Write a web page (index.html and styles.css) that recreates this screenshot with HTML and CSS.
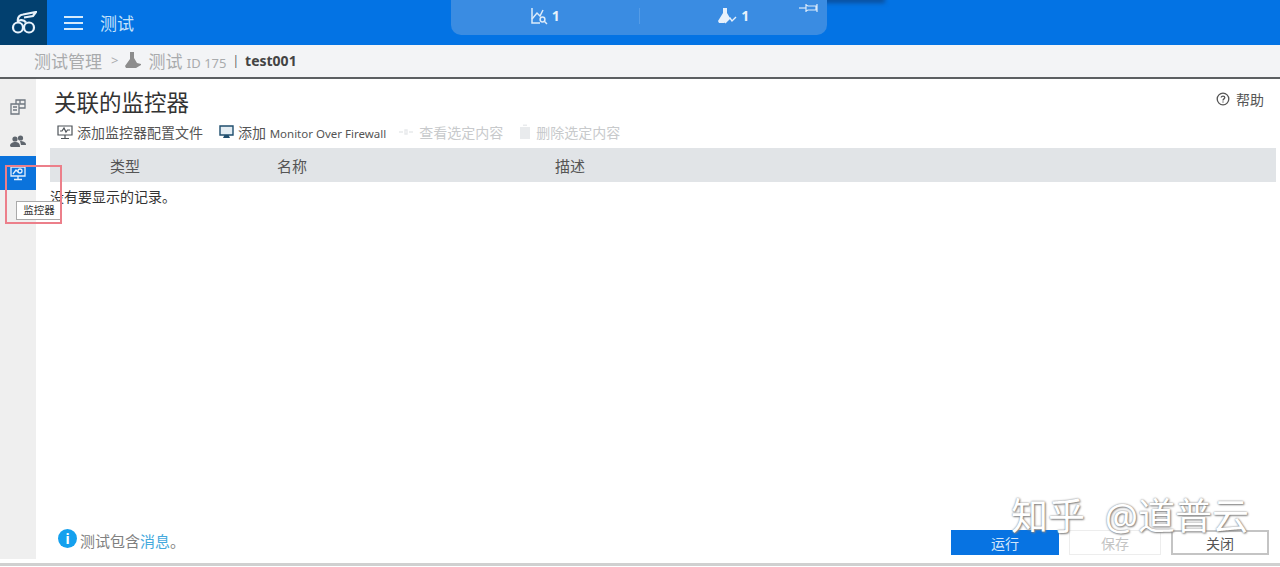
FILE: index.html
```html
<!doctype html>
<html lang="zh-CN">

<head>
    <meta charset="UTF-8">
    <meta name="viewport" content="width=device-width, initial-scale=1.0">
    <title>测试</title>
    <link rel="stylesheet" href="styles.css">
</head>

<body>
    <header class="top-bar">
        <div class="logo">
            <svg width="26" height="24" viewBox="0 0 26 24" fill="none" stroke="#e8f2fb" stroke-width="2.2">
                <circle cx="7" cy="16.5" r="5" />
                <circle cx="18" cy="16.5" r="5" />
                <path d="M7 11 C 8 8 13 9 15 11.5" />
                <path d="M7 11 C 6 6 9 4 12 3.5 L25 1 L22 5 L13 6.5" />
            </svg>
        </div>
        <div class="menu-icon"><span></span><span></span><span></span></div>
        <div class="page-title">测试</div>
        <div class="top-shade"></div>
        <div class="summary-panel">
            <div class="summary-item">
                <svg width="18" height="18" viewBox="0 0 18 18" fill="none" stroke="#dcebfa" stroke-width="1.5">
                    <path d="M2 1 V16 H10" />
                    <path d="M2 12 L7 6 L10 9 L13 3" />
                    <circle cx="12.5" cy="12.5" r="2.4" />
                    <path d="M14.3 14.3 L17 17" />
                </svg>
                <span>1</span>
            </div>
            <div class="summary-divider"></div>
            <div class="summary-item">
                <svg width="20" height="18" viewBox="0 0 20 18" fill="#e6f0fb">
                    <path d="M6 1 H10 V6 L13 11 L9 15 L7 16 H2 L1 14 L6 6 Z" />
                    <path d="M8 16 L13 11 L15 14 L19 10" fill="none" stroke="#e6f0fb" stroke-width="1.4" />
                </svg>
                <span>1</span>
            </div>
            <svg class="pin" width="19" height="10" viewBox="0 0 19 10" fill="none" stroke="#dcebfa" stroke-width="1.2">
                <path d="M0 5 H7" />
                <path d="M7 1 V9 M7 2 L9 3 H17 V7 H9 L7 8 M18 1 V9" />
            </svg>
        </div>
    </header>

    <nav class="breadcrumb">
        <span>测试管理</span>
        <span class="crumb-sep">&gt;</span>
        <svg width="18" height="18" viewBox="0 0 18 18" fill="#8d8d8d">
            <path d="M6 1 H10 V7 L13 12 L17 13 V14 L12 17 H2 L1 15 L6 8 Z" />
        </svg>
        <span>测试 <span class="crumb-id">ID 175</span></span>
        <span class="crumb-bar">|</span>
        <b class="crumb-name">test001</b>
    </nav>

    <div class="content-wrap">
        <aside class="side-nav">
            <div class="side-item">
                <svg width="16" height="16" viewBox="0 0 16 16" fill="none" stroke="#6f7780" stroke-width="1.3">
                    <path d="M1 5 H9 V15 H1 Z M3 8 H7 M3 11 H7" />
                    <path d="M6 5 V1 H15 V9 H9 M10 1 V5 H15" />
                </svg>
            </div>
            <div class="side-item people">
                <svg width="16" height="14" viewBox="0 0 16 14" fill="#5f666e">
                    <circle cx="5" cy="4" r="2.6" />
                    <circle cx="10.5" cy="3" r="2.6" />
                    <path d="M0 11 C0 8 3 7 5 7 C8 7 10 8 10 12 H1 Z" />
                    <path d="M10 6 C13 6 16 7 16 10 H11 Z" />
                </svg>
            </div>
            <div class="side-item active">
                <svg width="16" height="15" viewBox="0 0 16 15" fill="none" stroke="#e4f0fc" stroke-width="1.3">
                    <path d="M1 1 H15 V10 H1 Z" />
                    <path d="M4 13.5 H12 M8 10 V13.5" />
                    <circle cx="10" cy="5" r="2" />
                    <path d="M3 8 L6 4 L8 6" />
                </svg>
            </div>
        </aside>

        <main class="main">
            <div class="title-row">
                <h1>关联的监控器</h1>
                <div class="help">
                    <svg width="14" height="14" viewBox="0 0 14 14" fill="none" stroke="#555" stroke-width="1.3">
                        <circle cx="7" cy="7" r="5.8" />
                        <path d="M5.2 5.6 C5.2 3.6 8.8 3.6 8.8 5.6 C8.8 7 7 6.8 7 8.4 M7 9.6 V10.6" />
                    </svg>
                    <span>帮助</span>
                </div>
            </div>

            <div class="toolbar">
                <div class="tool">
                    <svg width="16" height="15" viewBox="0 0 16 15" fill="none" stroke="#4d5358" stroke-width="1.2">
                        <path d="M1 1 H15 V10 H1 Z M4 13.5 H12 M8 10 V13.5" />
                        <path d="M3 6 H5 L7 3 L9 7 L10.5 5 H13" />
                    </svg>
                    <span>添加监控器配置文件</span>
                </div>
                <div class="tool firewall-tool">
                    <svg width="15" height="14" viewBox="0 0 15 14">
                        <path d="M1 1 H14 V10 H1 Z" fill="#e4edf3" stroke="#1f4e6e" stroke-width="1.4" />
                        <path d="M4 13 H11 L9.5 10 H5.5 Z" fill="#1f4e6e" />
                    </svg>
                    <span>添加 <span class="tool-en">Monitor Over Firewall</span></span>
                </div>
                <div class="tool disabled">
                    <svg width="16" height="8" viewBox="0 0 16 8" fill="none" stroke="#e8eaec" stroke-width="1.4">
                        <path d="M1 4 H5 M7 2 H9 V6 H7 Z M11 4 H15" />
                    </svg>
                    <span>查看选定内容</span>
                </div>
                <div class="tool disabled">
                    <svg width="12" height="16" viewBox="0 0 12 16" fill="#e9ebed">
                        <path d="M1 3 H11 V15 H1 Z M4 0.5 H8 V2 H4 Z" />
                    </svg>
                    <span>删除选定内容</span>
                </div>
            </div>

            <div class="table-head">
                <div class="col-type">类型</div>
                <div class="col-name">名称</div>
                <div class="col-desc">描述</div>
            </div>
            <div class="empty-row">没有要显示的记录。</div>

            <div class="footer-row">
                <div class="notice">
                    <span class="info-dot">i</span>
                    <span>测试包含<a href="#" class="msg-link">消息</a>。</span>
                </div>
                <div class="actions">
                    <button type="button" class="btn primary">运行</button>
                    <button type="button" class="btn off">保存</button>
                    <button type="button" class="btn">关闭</button>
                </div>
            </div>
        </main>
    </div>
    <div class="page-end"></div>

    <!-- overlays -->
    <div class="tooltip">监控器</div>
    <div class="red-mark"></div>
    <div class="watermark">知乎 @道普云</div>
</body>

</html>
```

FILE: styles.css
```css
* {
    box-sizing: border-box;
}

html,
body {
    height: 567px;
    overflow: hidden;
}

body {
    margin: 0;
    background: #fff;
    font-family: "Noto Sans", "Noto Sans CJK SC", sans-serif;
    color: #333;
    position: relative;
    display: flex;
    flex-direction: column;
}

.top-bar {
    height: 45px;
    flex: none;
    background: #0373e4;
    display: flex;
    align-items: center;
    position: relative;
}

.logo {
    width: 47px;
    height: 45px;
    background: #02406f;
    display: flex;
    align-items: center;
    justify-content: center;
}

.menu-icon {
    width: 19px;
    margin-left: 17px;
    display: flex;
    flex-direction: column;
    gap: 4px;
}

.menu-icon span {
    height: 2px;
    background: #d5eafc;
}

.page-title {
    margin-left: 17px;
    font-size: 17px;
    color: #c5e2fa;
}

.top-shade {
    position: absolute;
    left: 700px;
    top: -3px;
    width: 185px;
    height: 6px;
    background: #0b4f9c;
    filter: blur(2px);
}

.summary-panel {
    position: absolute;
    left: 451px;
    top: 0;
    width: 376px;
    height: 35px;
    background: #3a8ce2;
    border-radius: 0 0 10px 10px;
    display: flex;
    align-items: center;
    padding-bottom: 4px;
}

.summary-item {
    flex: 1;
    display: flex;
    align-items: center;
    justify-content: center;
    gap: 4px;
    color: #e8f2fb;
    font-size: 14px;
    font-weight: 700;
}

.summary-divider {
    width: 1px;
    height: 16px;
    background: #559ce6;
}

.pin {
    position: absolute;
    right: 9px;
    top: 3px;
}

.breadcrumb {
    height: 34px;
    flex: none;
    background: #f3f4f6;
    border-bottom: 2px solid #5c5f62;
    display: flex;
    align-items: center;
    padding: 0 0 2px 34px;
    font-size: 17px;
    color: #a9abad;
    gap: 6px;
}

.crumb-sep {
    font-size: 13px;
    margin-left: 3px;
}

.crumb-id {
    font-size: 13px;
}

.crumb-bar {
    font-size: 12px;
    color: #666;
}

.crumb-name {
    font-size: 14px;
    color: #444;
}

.content-wrap {
    flex: 1;
    display: flex;
    min-height: 0;
}

.side-nav {
    width: 36px;
    flex: none;
    background: #efefef;
    padding-top: 11px;
    margin-bottom: 4px;
}

.side-item {
    height: 33px;
    display: flex;
    align-items: center;
    justify-content: center;
}

.side-item.people {
    padding-top: 4px;
}

.side-item.active {
    height: 34px;
    background: #0b73dc;
}

.main {
    flex: 1;
    padding: 0 4px 0 14px;
    display: flex;
    flex-direction: column;
}

.title-row {
    height: 39px;
    flex: none;
    display: flex;
    align-items: flex-start;
    justify-content: space-between;
    padding: 10px 12px 0 4px;
}

.title-row h1 {
    margin: 0;
    font-size: 22.5px;
    line-height: 28px;
    font-weight: 400;
    color: #333;
}

.help {
    display: flex;
    align-items: center;
    gap: 6px;
    font-size: 14px;
    color: #555;
    height: 20px;
}

.toolbar {
    height: 30px;
    flex: none;
    display: flex;
    align-items: center;
    padding: 0 0 2px 7px;
    font-size: 14px;
    color: #555;
}

.tool {
    display: flex;
    align-items: center;
    gap: 4px;
    margin-right: 16px;
}

.firewall-tool {
    margin-right: 12px;
}

.tool-en {
    font-size: 11.5px;
}

.tool.disabled {
    color: #c8cacc;
}

.tool.disabled svg {
    margin-right: 1px;
}

.table-head {
    height: 34px;
    flex: none;
    padding-top: 1px;
    background: #e1e4e7;
    display: flex;
    align-items: center;
    font-size: 15px;
    color: #555;
}

.col-type {
    width: 227px;
    padding-left: 60px;
}

.col-name {
    width: 278px;
}

.empty-row {
    margin-top: 5px;
    font-size: 14px;
    line-height: 20px;
    color: #333;
}

.footer-row {
    margin-top: auto;
    height: 37px;
    display: flex;
    justify-content: space-between;
    padding-left: 8px;
    padding-right: 7px;
}

.notice {
    display: flex;
    align-items: center;
    gap: 3px;
    height: 24px;
    margin-top: 2px;
    font-size: 15px;
    color: #808080;
}

.info-dot {
    width: 19px;
    height: 19px;
    border-radius: 50%;
    background: #14a0ee;
    color: #fff;
    font-size: 14px;
    font-weight: 700;
    line-height: 19px;
    text-align: center;
    margin-top: -4px;
}

.msg-link {
    color: #44a9dd;
    text-decoration: none;
}

.actions {
    display: flex;
    gap: 10px;
    align-items: flex-start;
    padding-top: 4px;
}

.btn {
    width: 98px;
    height: 25px;
    padding: 0;
    background: #fff;
    border: 2px solid #c4c4c4;
    font-family: inherit;
    font-size: 14px;
    color: #555;
}

.btn.primary {
    width: 108px;
    background: #0773e2;
    border: none;
    color: #d2e6fa;
}

.btn.off {
    width: 92px;
    border: 1px solid #ededed;
    color: #c4c4c4;
}

.page-end {
    height: 3px;
    flex: none;
    background: #d0d0d0;
    margin-bottom: 1px;
}

.tooltip {
    position: absolute;
    left: 16px;
    top: 201px;
    width: 46px;
    height: 19px;
    background: #fff;
    border: 1px solid #aaa;
    font-size: 10.5px;
    line-height: 17px;
    text-align: center;
    color: #333;
}

.red-mark {
    position: absolute;
    left: 5px;
    top: 165px;
    width: 57px;
    height: 59px;
    border: 2px solid #ec7f8a;
}

.watermark {
    position: absolute;
    right: 31px;
    top: 497px;
    font-size: 37px;
    line-height: 37px;
    word-spacing: 10px;
    color: #fff;
    text-shadow: 0 0 2px #777, 1px 1px 2px #888;
    white-space: nowrap;
}
```
